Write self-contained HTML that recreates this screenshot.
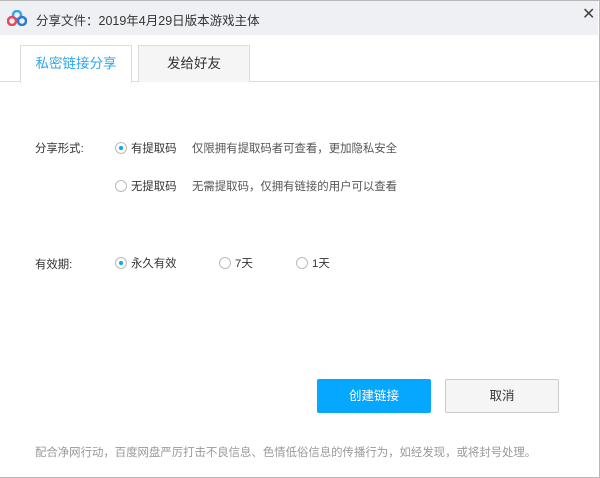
<!DOCTYPE html>
<html><head><meta charset="utf-8"><style>
*{margin:0;padding:0;box-sizing:border-box}
body{width:600px;height:478px;background:#fff;font-family:"Liberation Sans","Noto Sans CJK SC",sans-serif;font-size:11.4px;color:#333;position:relative;overflow:hidden}
.frame{position:absolute;left:0;top:0;width:600px;height:478px;border:1px solid #b8b8b8;border-left:none}
.title{position:absolute;left:0;top:1px;width:598px;height:34px;background:#eef0f4}
.title span{position:absolute;left:36px;top:9px;font-size:12.5px;color:#333}
.x{position:absolute;left:582px;top:4px;font-size:16px;color:#444;font-weight:300}
.tab{position:absolute;top:45px;height:37px;border:1px solid #ddd;border-bottom:none;text-align:center;line-height:36px;font-size:13.5px}
.line{position:absolute;left:0;top:81px;width:598px;height:1px;background:#ddd}
.t{position:absolute;white-space:nowrap}
.r{position:absolute;width:12px;height:12px;border:1px solid #bbb;border-radius:50%;background:#fff}
.r.on::after{content:"";position:absolute;left:3px;top:3px;width:4px;height:4px;border-radius:50%;background:#06a7ff}
.btn{position:absolute;top:379px;width:114px;height:34px;line-height:34px;text-align:center;font-size:12.5px;border-radius:2px}
</style></head><body>
<div class="title">
<svg style="position:absolute;left:7px;top:9px" width="20" height="16" viewBox="0 0 20 16"><circle cx="10" cy="5" r="4" fill="none" stroke="#2fa6f0" stroke-width="2.5"/><circle cx="5" cy="11" r="4" fill="none" stroke="#e6495a" stroke-width="2.5"/><circle cx="15" cy="11" r="4" fill="none" stroke="#2a7bd6" stroke-width="2.5"/></svg>
<span>分享文件：2019年4月29日版本游戏主体</span></div>
<div class="x">✕</div>
<div class="line"></div>
<div class="tab" style="left:20px;width:112px;background:#fff;color:#2fa6f0;height:38px">私密链接分享</div>
<div class="tab" style="left:138px;width:112px;background:#f5f5f5;color:#333">发给好友</div>
<div class="t" style="left:35px;top:140px">分享形式:</div>
<div class="r on" style="left:115px;top:142px"></div>
<div class="t" style="left:131px;top:140px">有提取码</div>
<div class="t" style="left:192px;top:140px;color:#555">仅限拥有提取码者可查看，更加隐私安全</div>
<div class="r" style="left:115px;top:180px"></div>
<div class="t" style="left:131px;top:178px">无提取码</div>
<div class="t" style="left:192px;top:178px;color:#555">无需提取码，仅拥有链接的用户可以查看</div>
<div class="t" style="left:35px;top:256px">有效期:</div>
<div class="r on" style="left:115px;top:257px"></div>
<div class="t" style="left:131px;top:255px">永久有效</div>
<div class="r" style="left:219px;top:257px"></div>
<div class="t" style="left:235px;top:255px">7天</div>
<div class="r" style="left:296px;top:257px"></div>
<div class="t" style="left:312px;top:255px">1天</div>
<div class="btn" style="left:317px;background:#06a7ff;color:#fff">创建链接</div>
<div class="btn" style="left:445px;background:#f5f5f5;border:1px solid #ccc;line-height:32px;color:#333">取消</div>
<div class="t" style="left:35px;top:444px;color:#999;font-size:11.4px">配合净网行动，百度网盘严厉打击不良信息、色情低俗信息的传播行为，如经发现，或将封号处理。</div>
<div class="frame"></div>
</body></html>
